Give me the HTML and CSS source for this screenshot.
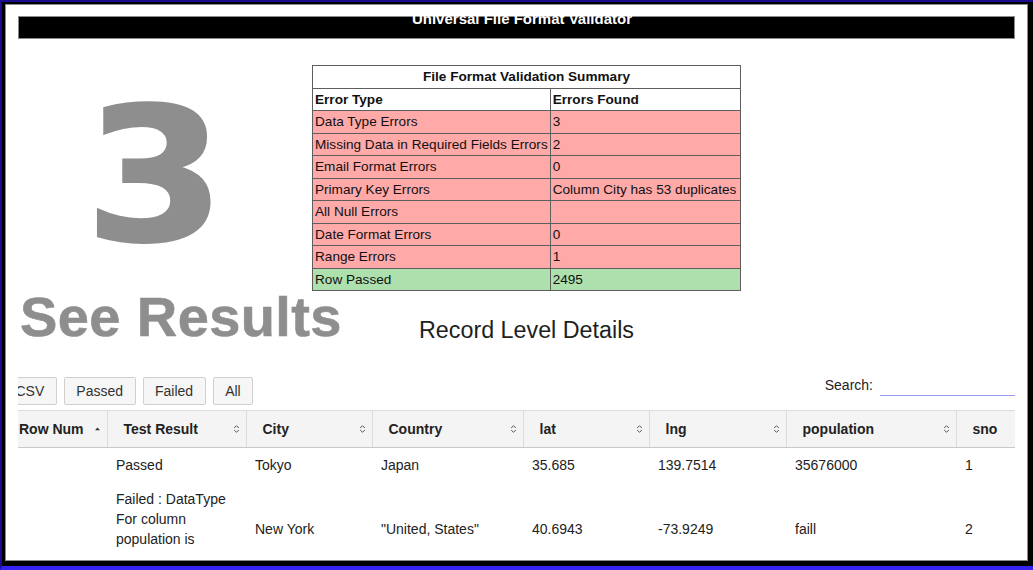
FILE: index.html
```html
<!DOCTYPE html>
<html lang="en">
<head>
<meta charset="utf-8">
<title>Universal File Format Validator</title>
<link rel="stylesheet" href="styles.css">
</head>
<body>
<div class="screen">
  <div class="window">
    <header class="titlebar"><h1>Universal File Format Validator</h1></header>

    <section class="overview">
      <div class="score">
        <div class="bignum">3</div>
        <div class="see">See Results</div>
      </div>
      <div class="summary">
        <table class="sumtable">
          <tr><th colspan="2" class="cap">File Format Validation Summary</th></tr>
          <tr class="head"><th class="c1">Error Type</th><th>Errors Found</th></tr>
          <tr class="bad"><td>Data Type Errors</td><td>3</td></tr>
          <tr class="bad"><td>Missing Data in Required Fields Errors</td><td>2</td></tr>
          <tr class="bad"><td>Email Format Errors</td><td>0</td></tr>
          <tr class="bad"><td>Primary Key Errors</td><td>Column City has 53 duplicates</td></tr>
          <tr class="bad"><td>All Null Errors</td><td></td></tr>
          <tr class="bad"><td>Date Format Errors</td><td>0</td></tr>
          <tr class="bad"><td>Range Errors</td><td>1</td></tr>
          <tr class="good"><td>Row Passed</td><td>2495</td></tr>
        </table>
        <h2>Record Level Details</h2>
      </div>
    </section>

    <section class="dt">
      <div class="dt-inner">
        <div class="controls">
          <div class="buttons">
            <button class="btn">CSV</button>
            <button class="btn">Passed</button>
            <button class="btn">Failed</button>
            <button class="btn">All</button>
          </div>
          <label class="search">Search:<input type="text" class="search-input"></label>
        </div>
        <table class="records">
          <colgroup>
            <col class="w1"><col class="w2"><col class="w3"><col class="w4"><col class="w5"><col class="w6"><col class="w7"><col class="w8">
          </colgroup>
          <thead>
            <tr>
              <th><div class="th-in"><span>Row Num</span><svg class="sort" width="7" height="10" viewBox="0 0 7 10"><path d="M1 6.2 L3.5 3.4 L6 6.2 Z" fill="#333"/></svg></div></th>
              <th><div class="th-in"><span>Test Result</span><svg class="sort" width="7" height="10" viewBox="0 0 7 10"><path d="M1.2 4 L3.5 1.7 L5.8 4 M1.2 6 L3.5 8.3 L5.8 6" fill="none" stroke="#555" stroke-width="1"/></svg></div></th>
              <th><div class="th-in"><span>City</span><svg class="sort" width="7" height="10" viewBox="0 0 7 10"><path d="M1.2 4 L3.5 1.7 L5.8 4 M1.2 6 L3.5 8.3 L5.8 6" fill="none" stroke="#555" stroke-width="1"/></svg></div></th>
              <th><div class="th-in"><span>Country</span><svg class="sort" width="7" height="10" viewBox="0 0 7 10"><path d="M1.2 4 L3.5 1.7 L5.8 4 M1.2 6 L3.5 8.3 L5.8 6" fill="none" stroke="#555" stroke-width="1"/></svg></div></th>
              <th><div class="th-in"><span>lat</span><svg class="sort" width="7" height="10" viewBox="0 0 7 10"><path d="M1.2 4 L3.5 1.7 L5.8 4 M1.2 6 L3.5 8.3 L5.8 6" fill="none" stroke="#555" stroke-width="1"/></svg></div></th>
              <th><div class="th-in"><span>lng</span><svg class="sort" width="7" height="10" viewBox="0 0 7 10"><path d="M1.2 4 L3.5 1.7 L5.8 4 M1.2 6 L3.5 8.3 L5.8 6" fill="none" stroke="#555" stroke-width="1"/></svg></div></th>
              <th><div class="th-in"><span>population</span><svg class="sort" width="7" height="10" viewBox="0 0 7 10"><path d="M1.2 4 L3.5 1.7 L5.8 4 M1.2 6 L3.5 8.3 L5.8 6" fill="none" stroke="#555" stroke-width="1"/></svg></div></th>
              <th><div class="th-in"><span>sno</span><svg class="sort" width="7" height="10" viewBox="0 0 7 10"><path d="M1.2 4 L3.5 1.7 L5.8 4 M1.2 6 L3.5 8.3 L5.8 6" fill="none" stroke="#555" stroke-width="1"/></svg></div></th>
            </tr>
          </thead>
          <tbody>
            <tr>
              <td></td><td>Passed</td><td>Tokyo</td><td>Japan</td><td>35.685</td><td>139.7514</td><td>35676000</td><td>1</td>
            </tr>
            <tr>
              <td></td><td class="result-long">Failed : DataType For column population is</td><td>New York</td><td>"United, States"</td><td>40.6943</td><td>-73.9249</td><td>faill</td><td>2</td>
            </tr>
          </tbody>
        </table>
      </div>
    </section>
  </div>
</div>
</body>
</html>
```

FILE: styles.css
```css
html, body {
  margin: 0;
  padding: 0;
  background: #000;
}

body {
  font-family: "Liberation Sans", Arial, Helvetica, sans-serif;
  color: #222;
}

.screen {
  width: 1033px;
  height: 570px;
  box-sizing: border-box;
  background: #000;
  border-top: 2px solid #1a0b8f;
  border-left: 2px solid #1a0b8f;
  border-bottom: 4px solid #3423f2;
  padding: 2px 5px 5px 3px;
}

.window {
  height: 100%;
  box-sizing: border-box;
  background: #fff;
  border: 1px solid #8a8a8a;
  padding: 0 12px;
  overflow: hidden;
}

/* title bar */
.titlebar {
  margin-top: 11px;
  height: 21px;
  background: #000;
  border: 1px solid #8a8a8a;
}

.titlebar h1 {
  margin: -6px 0 0;
  padding-left: 11px;
  font-size: 15px;
  line-height: 15px;
  font-weight: bold;
  color: #fff;
  text-align: center;
}

/* overview */
.overview {
  display: flex;
  align-items: flex-start;
}

.score {
  width: 294px;
  flex: none;
  white-space: nowrap;
  color: #8e8e8e;
  font-weight: bold;
}

.bignum {
  margin-top: 44px;
  padding-left: 61px;
  font-family: "DejaVu Sans", "Liberation Sans", sans-serif;
  font-size: 186px;
  line-height: 186px;
  height: 186px;
  -webkit-text-stroke: 2px #8e8e8e;
  transform: scaleX(1.09);
  transform-origin: 0 50%;
}

.see {
  margin-top: 20px;
  margin-left: 2px;
  font-size: 56px;
  line-height: 56px;
  letter-spacing: 0.4px;
  -webkit-text-stroke: 0.6px #8e8e8e;
}

.summary {
  width: 429px;
  flex: none;
  padding-top: 26px;
}

.sumtable {
  border-collapse: collapse;
  width: 429px;
  font-size: 13.6px;
  color: #111;
  white-space: nowrap;
}

.sumtable th,
.sumtable td {
  border: 1px solid #5e5e5e;
  padding: 0 2px;
  line-height: 21.5px;
  text-align: left;
}

.sumtable th {
  background: #fff;
  font-weight: bold;
}

.sumtable th.cap {
  text-align: center;
}

.sumtable .c1 {
  width: 231px;
}

.sumtable .bad td {
  background: #ffa9a9;
}

.sumtable .good td {
  background: #ade0ad;
}

.summary h2 {
  margin: 26px 0 0;
  font-size: 23.3px;
  line-height: 26px;
  font-weight: normal;
  color: #1d1f22;
  text-align: center;
}

/* data table area */
.dt {
  margin-top: 32px;
  overflow: hidden;
}

.dt-inner {
  margin-left: -15px;
  width: 1012px;
}

.controls {
  display: flex;
  justify-content: space-between;
  align-items: flex-start;
}

.buttons {
  display: flex;
  gap: 7px;
}

.btn {
  height: 28px;
  padding: 0 11.5px;
  font-family: "Liberation Sans", Arial, sans-serif;
  font-size: 14px;
  color: #333;
  background: #f6f6f6;
  border: 1px solid #cfcfcf;
  border-radius: 2px;
}

.search {
  display: flex;
  align-items: flex-start;
  gap: 7px;
  font-size: 14px;
  line-height: 16px;
  color: #222;
}

.search-input {
  width: 135px;
  height: 18px;
  box-sizing: content-box;
  margin: 0;
  padding: 0;
  border: none;
  border-bottom: 1px solid #9a9af8;
  outline: none;
  background: transparent;
}

.records {
  margin-top: 5px;
  border-collapse: collapse;
  table-layout: fixed;
  width: 1074px;
  font-size: 14px;
  color: #222;
}

.records .w1 { width: 104px; }
.records .w2 { width: 139px; }
.records .w3 { width: 126px; }
.records .w4 { width: 151px; }
.records .w5 { width: 126px; }
.records .w6 { width: 137px; }
.records .w7 { width: 170px; }
.records .w8 { width: 121px; }

.records th {
  height: 36px;
  padding: 0 6px 0 16px;
  background: #f4f4f4;
  border-top: 1px solid #dcdcdc;
  border-bottom: 1px solid #c9c9c9;
  border-left: 1px solid #dcdcdc;
  font-weight: bold;
  text-align: left;
  white-space: nowrap;
}

.records th:first-child {
  border-left: none;
}

.th-in {
  display: flex;
  align-items: center;
  justify-content: space-between;
}

.sort {
  flex: none;
}

.records td {
  padding: 7px 9px;
  line-height: 20px;
  vertical-align: middle;
}

.records td.result-long {
  vertical-align: top;
  padding-bottom: 27px;
}
```
